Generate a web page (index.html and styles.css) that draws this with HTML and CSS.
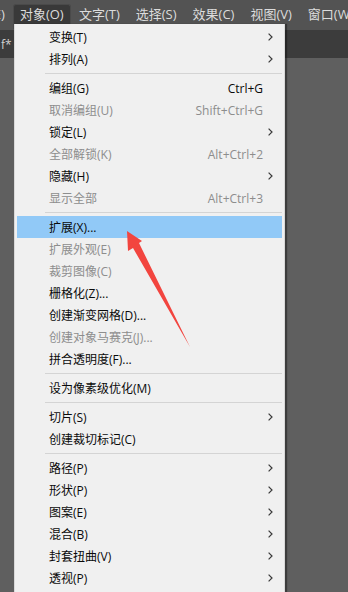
FILE: index.html
```html
<!DOCTYPE html>
<html lang="zh-CN">
<head>
    <meta charset="UTF-8">
    <meta name="viewport" content="width=device-width, initial-scale=1.0">
    <title>对象菜单</title>
    <link rel="stylesheet" href="styles.css">
</head>
<body>
    <div class="menubar">
        <div class="bar-item first">编辑(E)</div>
        <div class="bar-item active">对象(O)</div>
        <div class="bar-item">文字(T)</div>
        <div class="bar-item">选择(S)</div>
        <div class="bar-item">效果(C)</div>
        <div class="bar-item">视图(V)</div>
        <div class="bar-item">窗口(W)</div>
    </div>
    <div class="tabbar">
        <span class="tab-title">f*</span>
    </div>
    <div class="canvas"></div>

    <div class="menu">
        <div class="item"><span class="label">变换(T)</span><span class="sub"><svg width="5" height="8" viewBox="0 0 5 8"><polyline points="0.6,0.6 4,4 0.6,7.4"/></svg></span></div>
        <div class="item"><span class="label">排列(A)</span><span class="sub"><svg width="5" height="8" viewBox="0 0 5 8"><polyline points="0.6,0.6 4,4 0.6,7.4"/></svg></span></div>
        <div class="sep"></div>
        <div class="item"><span class="label">编组(G)</span><span class="key">Ctrl+G</span><span class="sub"></span></div>
        <div class="item off"><span class="label">取消编组(U)</span><span class="key">Shift+Ctrl+G</span><span class="sub"></span></div>
        <div class="item"><span class="label">锁定(L)</span><span class="sub"><svg width="5" height="8" viewBox="0 0 5 8"><polyline points="0.6,0.6 4,4 0.6,7.4"/></svg></span></div>
        <div class="item off"><span class="label">全部解锁(K)</span><span class="key">Alt+Ctrl+2</span><span class="sub"></span></div>
        <div class="item"><span class="label">隐藏(H)</span><span class="sub"><svg width="5" height="8" viewBox="0 0 5 8"><polyline points="0.6,0.6 4,4 0.6,7.4"/></svg></span></div>
        <div class="item off"><span class="label">显示全部</span><span class="key">Alt+Ctrl+3</span><span class="sub"></span></div>
        <div class="sep"></div>
        <div class="item hover"><span class="label">扩展(X)...</span><span class="sub"></span></div>
        <div class="item off"><span class="label">扩展外观(E)</span><span class="sub"></span></div>
        <div class="item off"><span class="label">裁剪图像(C)</span><span class="sub"></span></div>
        <div class="item"><span class="label">栅格化(Z)...</span><span class="sub"></span></div>
        <div class="item"><span class="label">创建渐变网格(D)...</span><span class="sub"></span></div>
        <div class="item off"><span class="label">创建对象马赛克(J)...</span><span class="sub"></span></div>
        <div class="item"><span class="label">拼合透明度(F)...</span><span class="sub"></span></div>
        <div class="sep"></div>
        <div class="item"><span class="label">设为像素级优化(M)</span><span class="sub"></span></div>
        <div class="sep"></div>
        <div class="item"><span class="label">切片(S)</span><span class="sub"><svg width="5" height="8" viewBox="0 0 5 8"><polyline points="0.6,0.6 4,4 0.6,7.4"/></svg></span></div>
        <div class="item"><span class="label">创建裁切标记(C)</span><span class="sub"></span></div>
        <div class="sep"></div>
        <div class="item"><span class="label">路径(P)</span><span class="sub"><svg width="5" height="8" viewBox="0 0 5 8"><polyline points="0.6,0.6 4,4 0.6,7.4"/></svg></span></div>
        <div class="item"><span class="label">形状(P)</span><span class="sub"><svg width="5" height="8" viewBox="0 0 5 8"><polyline points="0.6,0.6 4,4 0.6,7.4"/></svg></span></div>
        <div class="item"><span class="label">图案(E)</span><span class="sub"><svg width="5" height="8" viewBox="0 0 5 8"><polyline points="0.6,0.6 4,4 0.6,7.4"/></svg></span></div>
        <div class="item"><span class="label">混合(B)</span><span class="sub"><svg width="5" height="8" viewBox="0 0 5 8"><polyline points="0.6,0.6 4,4 0.6,7.4"/></svg></span></div>
        <div class="item"><span class="label">封套扭曲(V)</span><span class="sub"><svg width="5" height="8" viewBox="0 0 5 8"><polyline points="0.6,0.6 4,4 0.6,7.4"/></svg></span></div>
        <div class="item"><span class="label">透视(P)</span><span class="sub"><svg width="5" height="8" viewBox="0 0 5 8"><polyline points="0.6,0.6 4,4 0.6,7.4"/></svg></span></div>
    </div>

    <svg class="arrow" width="348" height="592" viewBox="0 0 348 592">
        <polygon points="127,231 142,241 139,243 190,347 133,248 128,251"/>
    </svg>
</body>
</html>
```

FILE: styles.css
```css
body {
    margin: 0;
    width: 348px;
    height: 592px;
    overflow: hidden;
    background: #5f5f5f;
    font-family: "Open Sans", "Noto Sans CJK SC", sans-serif;
    font-size: 12px;
    position: relative;
}
.menubar {
    height: 30px;
    background: #535353;
    display: flex;
    align-items: flex-start;
    padding-top: 5px;
    box-sizing: border-box;
    white-space: nowrap;
}
.bar-item {
    height: 19px;
    line-height: 19px;
    padding: 0 8px;
    color: #dcdcdc;
    font-size: 13px;
    flex-shrink: 0;
}
.bar-item.first {
    margin-left: -44px;
}
.bar-item.active {
    height: 25px;
    background: #393939;
    border: 1px solid #4a4a4a;
    border-bottom: none;
    border-radius: 3px 3px 0 0;
    margin-top: -1px;
    box-sizing: border-box;
    width: 58px;
    padding: 0 0 0 6px;
}
.tabbar {
    height: 28px;
    background: #3c3c3c;
    display: flex;
    align-items: center;
}
.tab-title {
    color: #d0d0d0;
    font-size: 12px;
    margin-left: 1px;
    white-space: nowrap;
}
.canvas {
    height: 534px;
    background: #5f5f5f;
}
.menu {
    position: absolute;
    left: 14px;
    top: 24px;
    width: 271px;
    height: 580px;
    box-sizing: border-box;
    background: #f0f0f0;
    border: 1px solid #d9d9d9;
    border-top: none;
    padding-top: 2px;
    box-shadow: 2px 0 1px rgba(0, 0, 0, 0.35);
}
.item {
    display: flex;
    align-items: center;
    height: 22px;
    margin: 0 2px;
    padding-left: 32px;
    color: #0a0a0a;
    white-space: nowrap;
}
.item.off {
    color: #8d8d8d;
}
.item.hover {
    background: #91c9f7;
}
.label {
    flex: 1;
}
.key {
    text-align: right;
}
.sub {
    width: 19px;
    padding-left: 5px;
    box-sizing: border-box;
    display: flex;
    align-items: center;
}
.sub polyline {
    fill: none;
    stroke: #3a3a3a;
    stroke-width: 1.2;
}
.sep {
    height: 1px;
    margin: 3px 2px 3px 30px;
    background: #d4d4d4;
}
.arrow {
    position: absolute;
    left: 0;
    top: 0;
}
.arrow polygon {
    fill: #f2453f;
}
```
